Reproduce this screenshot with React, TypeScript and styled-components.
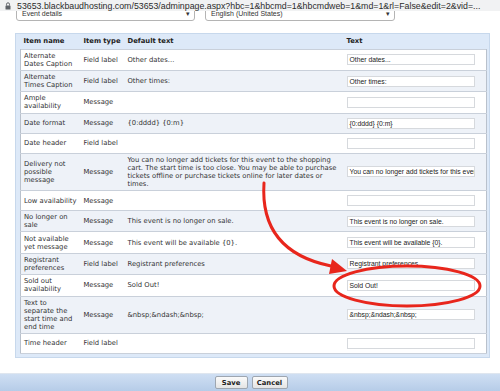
import { createGlobalStyle, styled } from "styled-components";

const GlobalStyle = createGlobalStyle`
  html, body {
    margin: 0;
    padding: 0;
    background: #ffffff;
  }
  body {
    width: 500px;
    height: 391px;
    overflow: hidden;
    font-family: "DejaVu Sans", Verdana, sans-serif;
    color: #333333;
  }
  * {
    box-sizing: border-box;
  }
`;

const Page = styled.div`
  position: relative;
  display: flex;
  flex-direction: column;
  width: 500px;
  height: 391px;
`;

// browser address bar
const AddressBar = styled.div`
  display: flex;
  align-items: center;
  gap: 6px;
  height: 11px;
  padding-left: 5px;
  background: #f1f2f3;
  font-family: "Liberation Sans", Arial, sans-serif;
  font-size: 8.8px;
  color: #2b2b2b;
  white-space: nowrap;
`;

const SelectRow = styled.div`
  display: flex;
  align-items: flex-end;
  gap: 10px;
  height: 10px;
  padding-left: 16px;
  overflow: hidden;
`;

const Select = styled.div<{ $width: number }>`
  display: flex;
  align-items: flex-end;
  justify-content: space-between;
  flex: none;
  width: ${({ $width }) => $width}px;
  height: 14px;
  padding: 0 4px 3px 5px;
  border: 1px solid #b4b4b4;
  border-radius: 3px;
  font-family: "Liberation Sans", Arial, sans-serif;
  font-size: 7px;
  line-height: 7px;
  color: #333;
`;

const Panel = styled.div`
  margin: 12px 0 0 15px;
  width: 475px;
  padding: 0 3px 3px 4px;
  background: #dde9f8;
  border: 1px solid #c7d8ec;
`;

const Table = styled.table`
  width: 466px;
  table-layout: fixed;
  border-collapse: collapse;
  font-size: 6.8px;
  line-height: 8px;
`;

const HeadCell = styled.th<{ $width: number }>`
  width: ${({ $width }) => $width}px;
  height: 15px;
  padding: 0 3px;
  text-align: left;
  font-weight: bold;
  color: #222;
  vertical-align: middle;
`;

const Row = styled.tr<{ $shade: boolean }>`
  background: ${({ $shade }) => ($shade ? "#eef2f8" : "#ffffff")};
`;

const Cell = styled.td`
  height: 20px;
  padding: 2.2px 3px;
  vertical-align: middle;
  color: #333;
  border-top: 1px solid #c9d0da;
  border-bottom: 1px solid #c9d0da;

  &:first-child {
    padding-right: 4px;
    border-left: 1px solid #b9c1cc;
  }
  &:last-child {
    border-right: 1px solid #b9c1cc;
  }
`;

const TextInput = styled.div`
  width: 128px;
  height: 11px;
  padding: 0 2px;
  border: 1px solid #d6d9dd;
  background: #fff;
  font-family: "Liberation Sans", Arial, sans-serif;
  font-size: 6.8px;
  line-height: 9px;
  color: #222;
  white-space: nowrap;
  overflow: hidden;
`;

const FooterBar = styled.div`
  display: flex;
  justify-content: center;
  align-items: center;
  gap: 4px;
  margin-top: auto;
  height: 18px;
  padding-left: 2px;
  border-top: 1px solid #dfe6ef;
  background: linear-gradient(#cfdff3, #b6cce8);
`;

const Button = styled.button<{ $width: number }>`
  width: ${({ $width }) => $width}px;
  height: 13px;
  padding: 0;
  border: 1px solid #9ea6b0;
  border-radius: 2px;
  background: linear-gradient(#fbfbfb, #e4e4e4);
  font-family: "DejaVu Sans", Verdana, sans-serif;
  font-size: 6.8px;
  font-weight: bold;
  color: #222;
`;

const Annotation = styled.svg`
  position: absolute;
  top: 0;
  left: 0;
  pointer-events: none;
`;

type Entry = {
  name: string;
  type: string;
  text: string;
};

const entries: Entry[] = [
  { name: "Alternate Dates Caption", type: "Field label", text: "Other dates..." },
  { name: "Alternate Times Caption", type: "Field label", text: "Other times:" },
  { name: "Ample availability", type: "Message", text: "" },
  { name: "Date format", type: "Message", text: "{0:dddd} {0:m}" },
  { name: "Date header", type: "Field label", text: "" },
  {
    name: "Delivery not possible message",
    type: "Message",
    text: "You can no longer add tickets for this event to the shopping cart. The start time is too close. You may be able to purchase tickets offline or purchase tickets online for later dates or times.",
  },
  { name: "Low availability", type: "Message", text: "" },
  { name: "No longer on sale", type: "Message", text: "This event is no longer on sale." },
  { name: "Not available yet message", type: "Message", text: "This event will be available {0}." },
  { name: "Registrant preferences", type: "Field label", text: "Registrant preferences" },
  { name: "Sold out availability", type: "Message", text: "Sold Out!" },
  {
    name: "Text to separate the start time and end time",
    type: "Message",
    text: "&nbsp;&ndash;&nbsp;",
  },
  { name: "Time header", type: "Field label", text: "" },
];

function Lock() {
  return (
    <svg width="6" height="8" viewBox="0 0 6 8">
      <path d="M1.5 3.5V2.3a1.5 1.5 0 0 1 3 0v1.2" fill="none" stroke="#5f6368" strokeWidth="1" />
      <rect x="0.5" y="3.5" width="5" height="4" rx="0.6" fill="#5f6368" />
    </svg>
  );
}

export default function App() {
  return (
    <Page>
      <GlobalStyle />
      <AddressBar>
        <Lock />
        <span>
          53653.blackbaudhosting.com/53653/adminpage.aspx?hbc=1&amp;hbcmd=1&amp;hbcmdweb=1&amp;md=1&amp;rl=False&amp;edit=2&amp;vid=...
        </span>
      </AddressBar>

      <SelectRow>
        <Select $width={179}>
          <span>Event details</span>
          <span>▾</span>
        </Select>
        <Select $width={190}>
          <span>English (United States)</span>
          <span>▾</span>
        </Select>
      </SelectRow>

      <Panel>
        <Table>
          <thead>
            <tr>
              <HeadCell $width={60}>Item name</HeadCell>
              <HeadCell $width={44}>Item type</HeadCell>
              <HeadCell $width={219}>Default text</HeadCell>
              <HeadCell $width={143}>Text</HeadCell>
            </tr>
          </thead>
          <tbody>
            {entries.map((entry, i) => (
              <Row key={entry.name} $shade={i % 2 === 1}>
                <Cell>{entry.name}</Cell>
                <Cell>{entry.type}</Cell>
                <Cell>{entry.text}</Cell>
                <Cell>
                  <TextInput>{entry.text}</TextInput>
                </Cell>
              </Row>
            ))}
          </tbody>
        </Table>
      </Panel>

      <FooterBar>
        <Button $width={33}>Save</Button>
        <Button $width={36}>Cancel</Button>
      </FooterBar>

      {/* red markup drawn over the screenshot */}
      <Annotation width="500" height="391" viewBox="0 0 500 391">
        <path
          d="M264 183 C 261 228, 282 256, 331 266"
          fill="none"
          stroke="#e8261c"
          strokeWidth="3"
          strokeLinecap="round"
        />
        <polygon points="347,271 329,274 332,259" fill="#e8261c" />
        <ellipse cx="407" cy="286" rx="73" ry="20" fill="none" stroke="#e8261c" strokeWidth="3" />
      </Annotation>
    </Page>
  );
}
